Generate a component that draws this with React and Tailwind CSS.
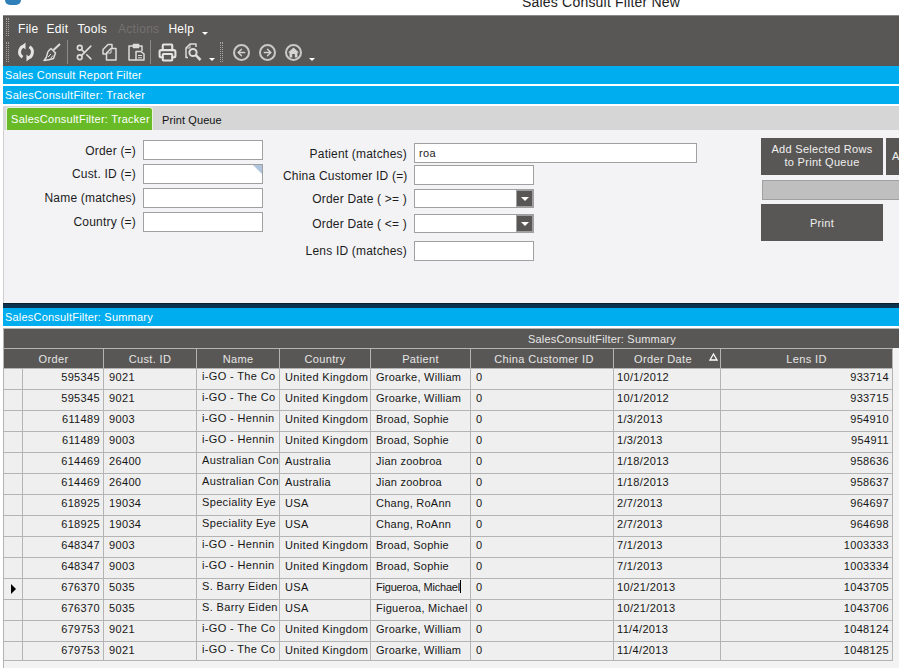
import React from "react";
import { Scissors, Printer, ArrowLeft, ArrowRight } from "lucide-react";

const UK = "United Kingdom";
const rows = [
  ["595345", "9021", "i-GO - The Co", UK, "Groarke, William", "10/1/2012", "933714"],
  ["595345", "9021", "i-GO - The Co", UK, "Groarke, William", "10/1/2012", "933715"],
  ["611489", "9003", "i-GO - Hennin", UK, "Broad, Sophie", "1/3/2013", "954910"],
  ["611489", "9003", "i-GO - Hennin", UK, "Broad, Sophie", "1/3/2013", "954911"],
  ["614469", "26400", "Australian Con", "Australia", "Jian zoobroa", "1/18/2013", "958636"],
  ["614469", "26400", "Australian Con", "Australia", "Jian zoobroa", "1/18/2013", "958637"],
  ["618925", "19034", "Speciality Eye", "USA", "Chang, RoAnn", "2/7/2013", "964697"],
  ["618925", "19034", "Speciality Eye", "USA", "Chang, RoAnn", "2/7/2013", "964698"],
  ["648347", "9003", "i-GO - Hennin", UK, "Broad, Sophie", "7/1/2013", "1003333"],
  ["648347", "9003", "i-GO - Hennin", UK, "Broad, Sophie", "7/1/2013", "1003334"],
  ["676370", "5035", "S. Barry Eiden", "USA", "Figueroa, Michael", "10/21/2013", "1043705"],
  ["676370", "5035", "S. Barry Eiden", "USA", "Figueroa, Michael", "10/21/2013", "1043706"],
  ["679753", "9021", "i-GO - The Co", UK, "Groarke, William", "11/4/2013", "1048124"],
  ["679753", "9021", "i-GO - The Co", UK, "Groarke, William", "11/4/2013", "1048125"],
];

const Grip = ({ className }) => (
  <div className={`w-[3px] border-x border-dotted border-[#a5a3a1] ${className}`} />
);

const Caret = () => (
  <div className="w-0 h-0 border-x-[3px] border-x-transparent border-t-[3px] border-t-white" />
);

const Sep = () => <div className="w-px h-[24px] bg-[#8d8b89]" />;

const Tool = ({ children }) => <div className="w-[26px] flex justify-center">{children}</div>;

const SyncIcon = () => (
  <svg width="20" height="20" viewBox="0 0 20 20" fill="none" stroke="#e4e4e4" strokeWidth="3">
    <path d="M9 3.8 A6.2 6.2 0 0 0 6.5 15.2" />
    <path d="M11 16.2 A6.2 6.2 0 0 0 13.5 4.8" />
    <path d="M9.5 0.5 L9.5 7.5 L5.5 4 Z" fill="#e4e4e4" strokeWidth="0" />
    <path d="M10.5 12.5 L10.5 19.5 L14.5 16 Z" fill="#e4e4e4" strokeWidth="0" />
  </svg>
);

const BroomIcon = () => (
  <svg width="20" height="20" viewBox="0 0 20 20" fill="none" stroke="#dcdcdc" strokeWidth="1.5" strokeLinejoin="round">
    <path d="M18 2 L11.5 8" strokeWidth="2" />
    <path d="M9 6.5 L13.5 11 L11.5 16.5 Q7 18 2 18.5 Q5 15.5 5 13 Q5.5 9 9 6.5 Z" />
    <path d="M6 15 L9 12" strokeWidth="1" />
    <path d="M8.5 16.5 L11 13.5" strokeWidth="1" />
  </svg>
);

const CopyIcon = () => (
  <svg width="20" height="20" viewBox="0 0 20 20" fill="none" stroke="#dcdcdc" strokeWidth="1.5" strokeLinejoin="round">
    <path d="M6 12 L3 12 L3 7.5 L8 2.5 L12 2.5 L12 6" />
    <path d="M11 6.5 L16 6.5 L16 18 L6.5 18 L6.5 11 Z" />
    <path d="M11 6.5 L11 11 L6.5 11" strokeWidth="1" />
  </svg>
);

const PasteIcon = () => (
  <svg width="20" height="20" viewBox="0 0 20 20" fill="none" stroke="#dcdcdc" strokeWidth="1.5" strokeLinejoin="round">
    <path d="M7 4 L3 4 L3 18 L10 18" />
    <path d="M13 4 L16 4 L16 9" />
    <rect x="7" y="2" width="6" height="4" fill="#dcdcdc" strokeWidth="0.5" />
    <path d="M10 9.5 L15 9.5 L18 12 L18 18 L10 18 Z" />
    <path d="M12 13.5 L16 13.5 M12 15.8 L16 15.8" strokeWidth="1" />
  </svg>
);

const PreviewIcon = () => (
  <svg width="20" height="20" viewBox="0 0 20 20" fill="none" stroke="#dcdcdc" strokeWidth="1.5" strokeLinejoin="round">
    <path d="M5 15.5 L3 15.5 L3 6 L7 2 L13 2 L13 5" />
    <path d="M7 2 L7 6 L3 6" strokeWidth="1" />
    <circle cx="10" cy="10.5" r="3.6" strokeWidth="2" />
    <path d="M12.8 13.2 L17.5 18" strokeWidth="2.6" />
  </svg>
);

const HouseFill = () => (
  <svg width="11" height="11" viewBox="0 0 11 11" fill="#d4d4d4">
    <path d="M5.5 0.5 L11 5.5 L9.5 5.5 L9.5 10.5 L6.8 10.5 L6.8 7 L4.2 7 L4.2 10.5 L1.5 10.5 L1.5 5.5 L0 5.5 Z" />
  </svg>
);

const Ring = ({ children }) => (
  <Tool>
    <div className="w-[17px] h-[17px] rounded-full border-2 border-[#c9c9c9] flex items-center justify-center">
      {children}
    </div>
  </Tool>
);

const Field = ({ label, labelW, inputW, h = "h-[20px]", labelClass = "", value, corner, select, className = "" }) => (
  <div className={`flex items-center ${className}`}>
    <div className={`${labelW} ${labelClass} text-right text-[12px] tracking-[0.2px] text-[#1c1c1c] whitespace-nowrap`}>{label}</div>
    <div className={`relative ${inputW} ${h} ml-[7px] bg-white border border-[#a0a0a0] flex items-center pl-[4px] text-[11px] tracking-[0.4px] text-[#1c1c1c]`}>
      {value}
      {corner && (
        <div className="absolute top-0 right-0 w-0 h-0 border-l-[9px] border-l-transparent border-t-[9px] border-t-[#b0c4de]" />
      )}
      {select && (
        <div className="absolute top-0 right-0 w-[17px] h-full bg-[#595755] border border-[#a0a0a0] flex items-center justify-center">
          <div className="w-0 h-0 border-x-[4px] border-x-transparent border-t-[4px] border-t-white" />
        </div>
      )}
    </div>
  </div>
);

const cols = [
  "w-[19px]",
  "w-[81px]",
  "w-[93px]",
  "w-[83px]",
  "w-[91px]",
  "w-[100px]",
  "w-[143px]",
  "w-[107px]",
  "w-[172px]",
];

const Head = ({ w, children, className = "" }) => (
  <div className={`${w} shrink-0 border-r border-[#b4b4b4] flex items-center justify-center pt-[2px] ${className}`}>
    {children}
  </div>
);

// text is anchored to the top of the cell so the short last row keeps the same offset
const Cell = ({ w, children, className = "" }) => (
  <div className={`${w} shrink-0 border-r border-[#b4b4b4] flex items-start overflow-hidden whitespace-nowrap leading-[14px] ${className}`}>
    {children}
  </div>
);

const BlueBar = ({ children, className = "" }) => (
  <div className={`h-[18px] bg-[#00aeef] text-white text-[11px] leading-[18px] pl-[2px] ${className}`}>
    {children}
  </div>
);

const DarkButton = ({ className = "", children }) => (
  <div className={`bg-[#595755] text-[#f0f0f0] text-[11px] tracking-[0.3px] leading-[13px] text-center flex items-center justify-center shrink-0 ${className}`}>
    {children}
  </div>
);

export default function App() {
  return (
    <div className="w-[899px] h-[668px] overflow-hidden bg-white font-['Liberation_Sans',Arial,sans-serif]">
      {/* window title, cut off by the top of the capture */}
      <div className="h-[15px] overflow-hidden flex">
        <div className="w-[5px] shrink-0" />
        <div className="w-[16px] h-[5px] rounded-b-[5px] bg-[#2f7fb8] shrink-0" />
        <div className="ml-[501px] -mt-[6px] text-[14px] tracking-[0.2px] leading-[16px] text-[#222] whitespace-nowrap">
          Sales Consult Filter New
        </div>
      </div>

      <div className="ml-[3px] border-t border-[#8a8886] bg-[#595755] h-[51px]">
        <div className="h-[22px] flex items-center text-white text-[12px] tracking-[0.3px]">
          <Grip className="ml-[3px] h-[18px]" />
          <div className="flex pt-[4px]">
            <span className="ml-[9px]">File</span>
            <span className="ml-[8px]">Edit</span>
            <span className="ml-[9px]">Tools</span>
            <span className="ml-[11px] text-[#73716f]">Actions</span>
            <span className="ml-[9px]">Help</span>
          </div>
          <div className="ml-[8px] mt-[12px]">
            <Caret />
          </div>
        </div>
        <div className="h-[28px] flex items-center">
          <Grip className="ml-[3px] h-[20px]" />
          <div className="ml-[4px] flex items-center">
            <Tool>
              <SyncIcon />
            </Tool>
            <Tool>
              <BroomIcon />
            </Tool>
          </div>
          <div className="ml-[2px]">
            <Sep />
          </div>
          <div className="ml-[3px] flex items-center">
            <Tool>
              <Scissors size={19} strokeWidth={2} className="text-[#dcdcdc]" />
            </Tool>
            <Tool>
              <CopyIcon />
            </Tool>
            <Tool>
              <PasteIcon />
            </Tool>
          </div>
          <div className="ml-[1px]">
            <Sep />
          </div>
          <div className="ml-[3px] flex items-center">
            <Tool>
              <Printer size={19} strokeWidth={2.6} className="text-[#e4e4e4]" />
            </Tool>
            <Tool>
              <PreviewIcon />
            </Tool>
          </div>
          <div className="ml-[3px] mt-[14px]">
            <Caret />
          </div>
          <Grip className="ml-[5px] h-[20px]" />
          <div className="ml-[5px] flex items-center">
            <Ring>
              <ArrowLeft size={11} strokeWidth={3} className="text-[#d4d4d4]" />
            </Ring>
            <Ring>
              <ArrowRight size={11} strokeWidth={3} className="text-[#d4d4d4]" />
            </Ring>
            <Ring>
              <HouseFill />
            </Ring>
          </div>
          <div className="ml-[3px] mt-[14px]">
            <Caret />
          </div>
        </div>
      </div>

      <div className="ml-[3px]">
        <BlueBar className="tracking-[0.2px]">Sales Consult Report Filter</BlueBar>
        <BlueBar className="mt-[2px] tracking-[0.3px]">SalesConsultFilter: Tracker</BlueBar>

        <div className="mt-[2px] h-[24px] bg-[#d6d6d6] flex items-end text-[11px]">
          <div className="ml-[3px] w-[147px] h-[23px] bg-[#68bb26] border border-b-0 border-[#e8f3dc] rounded-t-[3px] text-white flex items-center justify-center pl-[2px] whitespace-nowrap tracking-[0.25px]">
            SalesConsultFilter: Tracker
          </div>
          <div className="ml-[9px] h-[18px] text-[#111] tracking-[0.1px]">Print Queue</div>
        </div>

        <div className="h-[173px] bg-[#f3f3f6] border-l border-[#cfcfcf] flex">
          <div className="pt-[10px] flex flex-col gap-[4px]">
            <Field label="Order (=)" labelW="w-[132px]" inputW="w-[120px]" labelClass="pt-[1px]" />
            <Field label="Cust. ID (=)" labelW="w-[132px]" inputW="w-[120px]" corner />
            <Field label="Name (matches)" labelW="w-[132px]" inputW="w-[120px]" />
            <Field label="Country (=)" labelW="w-[132px]" inputW="w-[120px]" />
          </div>
          <div className="pt-[13px] ml-[20px] flex flex-col">
            <Field label="Patient (matches)" labelW="w-[124px]" inputW="w-[283px]" value="roa" labelClass="pt-[1px]" />
            <Field label="China Customer ID (=)" labelW="w-[124px]" inputW="w-[120px]" className="mt-[2px]" labelClass="pt-[1px]" />
            <Field label="Order Date ( >= )" labelW="w-[124px]" inputW="w-[120px]" h="h-[19px]" select className="mt-[4px]" />
            <Field label="Order Date ( <= )" labelW="w-[124px]" inputW="w-[120px]" h="h-[19px]" select className="mt-[6px]" labelClass="pt-[1px]" />
            <Field label="Lens ID (matches)" labelW="w-[124px]" inputW="w-[120px]" className="mt-[8px]" />
          </div>
          <div className="pt-[8px] ml-[64px] flex flex-col overflow-hidden w-[138px]">
            <div className="flex gap-[3px]">
              <DarkButton className="w-[122px] h-[37px] pb-[2px]">
                Add Selected Rows
                <br />
                to Print Queue
              </DarkButton>
              <DarkButton className="w-[122px] h-[37px] justify-start pl-[6px]">Add</DarkButton>
            </div>
            <div className="mt-[5px] ml-[1px] w-[160px] h-[20px] bg-[#bfbfbf] border border-[#a0a0a0]" />
            <DarkButton className="mt-[4px] w-[122px] h-[37px] pt-[2px]">Print</DarkButton>
          </div>
        </div>

        <div className="h-[5px] bg-[#0b3350] border-t border-[#0a1e2c]" />
        <BlueBar className="tracking-[0.2px]">SalesConsultFilter: Summary</BlueBar>

        <div className="mt-[2px] bg-[#f3f3f3] border-l border-[#b4b4b4] h-[340px]">
          <div className="h-[20px] bg-[#595755] border-t border-[#b4b4b4] text-[#e6e6e6] text-[11px] tracking-[0.2px] flex items-center pl-[524px] pt-[2px]">
            SalesConsultFilter: Summary
          </div>
          <div className="h-[20px] flex bg-[#595755] border-t border-[#b4b4b4] text-[#e6e6e6] text-[11px] tracking-[0.35px] w-[889px]">
            <Head w="w-[100px]">Order</Head>
            <Head w={cols[2]}>Cust. ID</Head>
            <Head w={cols[3]}>Name</Head>
            <Head w={cols[4]}>Country</Head>
            <Head w={cols[5]}>Patient</Head>
            <Head w={cols[6]} className="pl-[4px]">China Customer ID</Head>
            <Head w={cols[7]} className="relative pr-[8px]">
              Order Date
              <svg width="9" height="8" viewBox="0 0 9 8" className="absolute right-[2px] top-[4px]" fill="none" stroke="white" strokeWidth="1.3">
                <path d="M4.5 1 L8 7 L1 7 Z" />
              </svg>
            </Head>
            <Head w={cols[8]}>Lens ID</Head>
          </div>
          {rows.map((r, idx) => (
            <div
              key={idx}
              className="h-[21px] last:h-[20px] w-[889px] flex border-t border-[#b4b4b4] bg-[#efefef] text-[#161616] text-[11px] tracking-[0.35px] last:border-b"
            >
              <Cell w={cols[0]} className="justify-center pt-[5px]">
                {idx === 10 && (
                  <div className="w-0 h-0 ml-[1px] border-y-[5px] border-y-transparent border-l-[5px] border-l-black" />
                )}
              </Cell>
              <Cell w={cols[1]} className="justify-end pr-[3px] pt-[1px]">{r[0]}</Cell>
              <Cell w={cols[2]} className="pl-[5px] pt-[1px]">{r[1]}</Cell>
              <Cell w={cols[3]} className="pl-[5px]">{r[2]}</Cell>
              <Cell w={cols[4]} className="pl-[5px] pt-[1px]">{r[3]}</Cell>
              <Cell w={cols[5]} className="pl-[5px] pt-[1px]">
                {idx === 10 ? <span className="tracking-[-0.2px]">{r[4]}</span> : <span className="tracking-[0.25px]">{r[4]}</span>}
                {idx === 10 && <div className="w-px h-[13px] bg-black" />}
              </Cell>
              <Cell w={cols[6]} className="pl-[5px] pt-[1px]">0</Cell>
              <Cell w={cols[7]} className="pl-[3px] pt-[1px]">{r[5]}</Cell>
              <Cell w={cols[8]} className="justify-end pr-[3px] pt-[1px]">{r[6]}</Cell>
            </div>
          ))}
        </div>
      </div>
    </div>
  );
}
